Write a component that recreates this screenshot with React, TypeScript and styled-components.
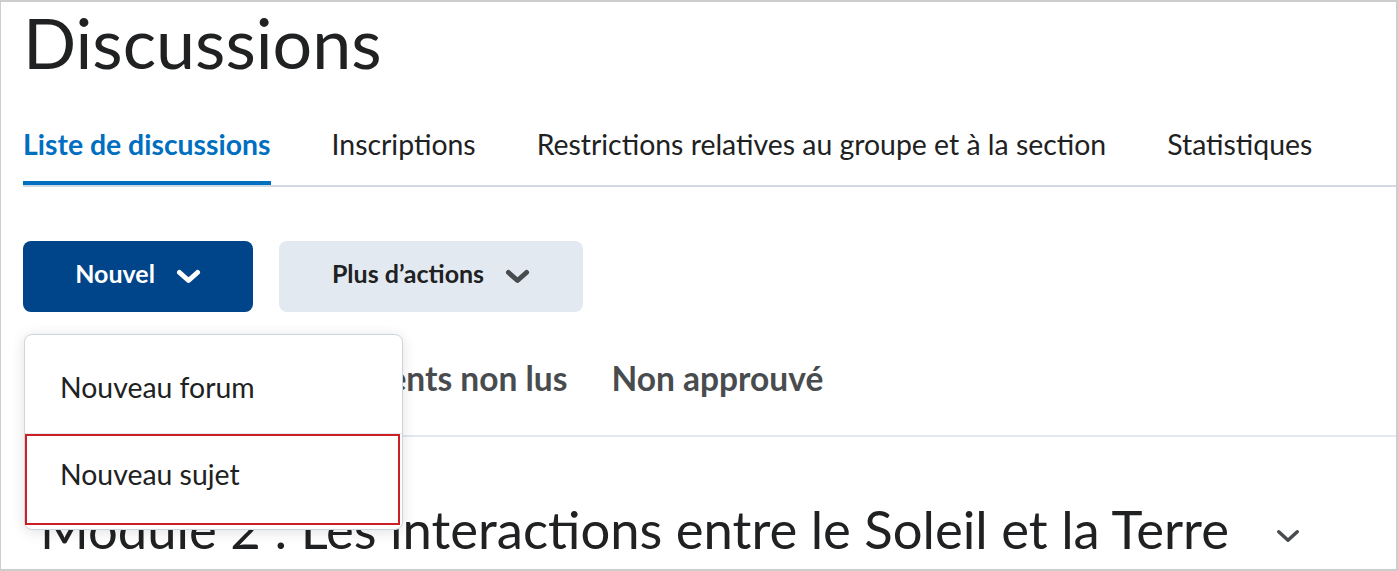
import React from "react";
import styled, { createGlobalStyle } from "styled-components";

const GlobalStyle = createGlobalStyle`
  html, body { margin: 0; padding: 0; background: #ffffff; }
  body { font-family: Lato, "Noto Sans", sans-serif; color: #202122; }
  * { box-sizing: border-box; }
`;

const Frame = styled.div`
  width: 1398px;
  height: 571px;
  border-style: solid;
  border-color: #cdcdcd;
  border-width: 2px 2px 2px 1px;
  overflow: hidden;
  padding-left: 22px;
  background: #fff;
`;

const Title = styled.h1`
  margin: 0;
  font-size: 70px;
  line-height: 80px;
  font-weight: 400;
  color: #202122;
`;

const TabBar = styled.nav`
  display: flex;
  gap: 61px;
  margin-top: 46px;
  border-bottom: 2px solid #d3d9e3;
`;

const Tab = styled.div<{ $active?: boolean }>`
  font-size: 28.4px;
  line-height: 32px;
  padding-bottom: 21px;
  font-weight: ${(p) => (p.$active ? 700 : 400)};
  color: ${(p) => (p.$active ? "#006fbf" : "#202122")};
  border-bottom: 4px solid ${(p) => (p.$active ? "#006fbf" : "transparent")};
  white-space: nowrap;
`;

const Toolbar = styled.div`
  display: flex;
  gap: 26px;
  margin-top: 54px;
`;

const Button = styled.button<{ $primary?: boolean; $width: number }>`
  display: flex;
  align-items: center;
  justify-content: center;
  gap: 21px;
  width: ${(p) => p.$width}px;
  height: 71px;
  border: none;
  border-radius: 8px;
  font-family: Lato, "Noto Sans", sans-serif;
  font-size: 25px;
  font-weight: 700;
  padding: 0;
  background: ${(p) => (p.$primary ? "#004489" : "#e3e9f1")};
  color: ${(p) => (p.$primary ? "#ffffff" : "#202122")};
  svg { color: ${(p) => (p.$primary ? "#ffffff" : "#494c4e")}; }
`;

const ButtonLabel = styled.span`
  margin-bottom: 8px;
`;

const Stage = styled.div`
  position: relative;
  padding-top: 46px;
`;

const FilterRow = styled.div`
  display: flex;
  gap: 44px;
  padding-left: 291px;
  padding-bottom: 37px;
  border-bottom: 2px solid #e3e9f1;
  margin-left: 1px;
`;

const Filter = styled.span`
  font-size: 33.5px;
  line-height: 40px;
  font-weight: 700;
  color: #494c4e;
  white-space: nowrap;
`;

const ModuleHeading = styled.div`
  display: flex;
  align-items: center;
  gap: 47px;
  margin-top: 62px;
  padding-left: 17px;
`;

const ModuleTitle = styled.h2`
  margin: 0;
  font-size: 52.6px;
  line-height: 60px;
  font-weight: 400;
  color: #202122;
  white-space: nowrap;
`;

const ModuleChevron = styled.span`
  display: flex;
  color: #494c4e;
  margin-top: 14px;
`;

const Menu = styled.div`
  position: absolute;
  left: 1px;
  top: 22px;
  width: 379px;
  height: 196px;
  background: #fff;
  border: 1px solid #cdd5dc;
  border-radius: 8px;
  box-shadow: 0 2px 14px rgba(0, 0, 0, 0.12);
  display: flex;
  flex-direction: column;
`;

const MenuItem = styled.div<{ $focused?: boolean }>`
  font-size: 28.4px;
  line-height: 30px;
  color: #202122;
  padding-left: ${(p) => (p.$focused ? 33 : 35)}px;
  padding-top: ${(p) => (p.$focused ? 23 : 37)}px;
  height: ${(p) => (p.$focused ? 91 : 99)}px;
  margin-right: ${(p) => (p.$focused ? 2 : 0)}px;
  border: ${(p) => (p.$focused ? "2px solid #cd2026" : "none")};
  border-bottom: ${(p) => (p.$focused ? "2px solid #cd2026" : "1px solid #e3e9f1")};
`;

const Chevron = ({ w, h, sw }: { w: number; h: number; sw: number }) => (
  <svg width={w} height={h} viewBox={`0 0 ${w} ${h}`} fill="none">
    <path
      d={`M${sw / 2 + 1} ${sw / 2 + 1} L${w / 2} ${h - sw / 2 - 1} L${w - sw / 2 - 1} ${sw / 2 + 1}`}
      stroke="currentColor"
      strokeWidth={sw}
      strokeLinecap="round"
      strokeLinejoin="round"
    />
  </svg>
);

export default function App() {
  return (
    <>
      <GlobalStyle />
      <Frame>
        <Title>Discussions</Title>
        <TabBar>
          <Tab $active>Liste de discussions</Tab>
          <Tab>Inscriptions</Tab>
          <Tab>Restrictions relatives au groupe et à la section</Tab>
          <Tab>Statistiques</Tab>
        </TabBar>
        <Toolbar>
          <Button $primary $width={230}>
            <ButtonLabel>Nouvel</ButtonLabel>
            <Chevron w={25} h={15} sw={5} />
          </Button>
          <Button $width={304}>
            <ButtonLabel>Plus d’actions</ButtonLabel>
            <Chevron w={25} h={15} sw={5} />
          </Button>
        </Toolbar>
        <Stage>
          <FilterRow>
            <Filter>Éléments non lus</Filter>
            <Filter>Non approuvé</Filter>
          </FilterRow>
          <ModuleHeading>
            <ModuleTitle>Module 2 : Les interactions entre le Soleil et la Terre</ModuleTitle>
            <ModuleChevron>
              <Chevron w={24} h={14} sw={3.5} />
            </ModuleChevron>
          </ModuleHeading>
          <Menu>
            <MenuItem>Nouveau forum</MenuItem>
            <MenuItem $focused>Nouveau sujet</MenuItem>
          </Menu>
        </Stage>
      </Frame>
    </>
  );
}
